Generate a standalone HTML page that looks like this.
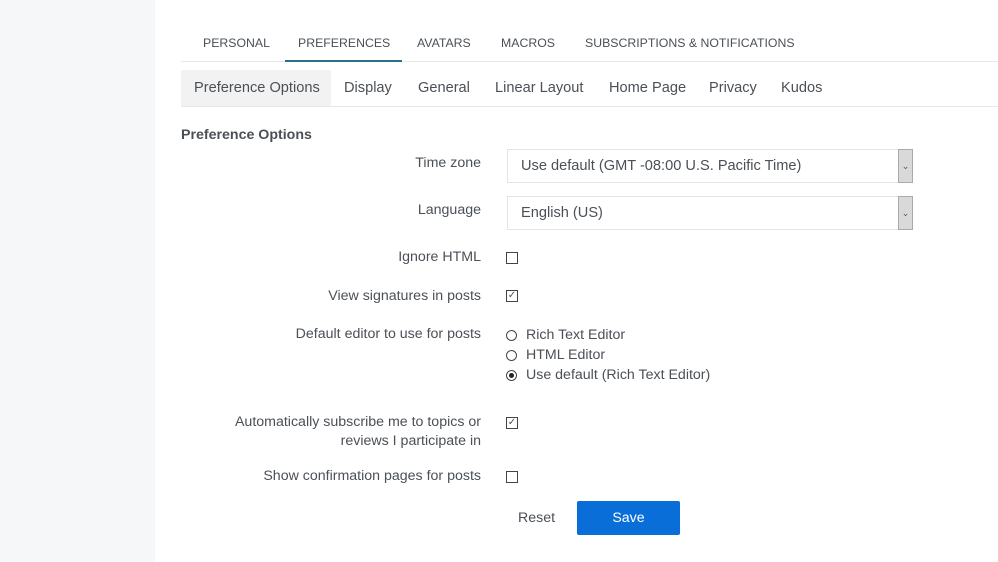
<!DOCTYPE html>
<html><head><style>
body{margin:0;width:998px;height:562px;background:#fff;font-family:"Liberation Sans",sans-serif;color:#4b5057;position:relative;overflow:hidden}
.a{position:absolute;white-space:nowrap}
.side{left:0;top:0;width:155px;height:562px;background:#f6f7f9}
.tab{top:36px;font-size:12.3px}
.sub{top:80px;font-size:14.6px}
.lbl{right:517px;font-size:14.2px;text-align:right;line-height:19px}
.sel{left:507px;width:406px;height:34px;border:1px solid #e4e4e4;box-sizing:border-box;font-size:14.6px;line-height:33px;padding-left:13px}
.arr{position:absolute;right:-1px;top:-1px;width:15px;height:34px;background:#d9d9d9;border:1px solid #aaa;box-sizing:border-box;font-size:9px;text-align:center;line-height:32px;color:#555}
.cb{left:506px;width:10px;height:10px;border:1px solid #444;font-size:10px;line-height:10px;text-align:center}
.rd{left:506px;width:9px;height:9px;border:1px solid #444;border-radius:50%}
.rt{left:526px;font-size:14.2px}
</style></head><body>
<div class="a side"></div>
<div class="a tab" style="left:203px">PERSONAL</div>
<div class="a tab" style="left:298px">PREFERENCES</div>
<div class="a tab" style="left:417px">AVATARS</div>
<div class="a tab" style="left:501px">MACROS</div>
<div class="a tab" style="left:585px">SUBSCRIPTIONS &amp; NOTIFICATIONS</div>
<div class="a" style="left:181px;top:61px;width:817px;height:1px;background:#e6e8ea"></div>
<div class="a" style="left:285px;top:60px;width:117px;height:2px;background:#2b6f8c"></div>
<div class="a" style="left:181px;top:70px;width:150px;height:36px;background:#f2f2f2"></div>
<div class="a" style="left:181px;top:106px;width:817px;height:1px;background:#e6e8ea"></div>
<div class="a sub" style="left:194px">Preference Options</div>
<div class="a sub" style="left:344px">Display</div>
<div class="a sub" style="left:418px">General</div>
<div class="a sub" style="left:495px">Linear Layout</div>
<div class="a sub" style="left:609px">Home Page</div>
<div class="a sub" style="left:709px">Privacy</div>
<div class="a sub" style="left:781px">Kudos</div>
<div class="a" style="left:181px;top:127px;font-size:14.2px;font-weight:bold">Preference Options</div>
<div class="a lbl" style="top:154px">Time zone</div>
<div class="a sel" style="top:149px">Use default (GMT -08:00 U.S. Pacific Time)<div class="arr">&#8964;</div></div>
<div class="a lbl" style="top:201px">Language</div>
<div class="a sel" style="top:196px">English (US)<div class="arr">&#8964;</div></div>
<div class="a lbl" style="top:248px">Ignore HTML</div>
<div class="a cb" style="top:252px"></div>
<div class="a lbl" style="top:287px">View signatures in posts</div>
<div class="a cb" style="top:290px">&#10003;</div>
<div class="a lbl" style="top:325px">Default editor to use for posts</div>
<div class="a rd" style="top:330px"></div><div class="a rt" style="top:327px">Rich Text Editor</div>
<div class="a rd" style="top:350px"></div><div class="a rt" style="top:347px">HTML Editor</div>
<div class="a rd" style="top:370px"><div style="margin:2px;width:5px;height:5px;border-radius:50%;background:#222"></div></div><div class="a rt" style="top:367px">Use default (Rich Text Editor)</div>
<div class="a lbl" style="top:413px">Automatically subscribe me to topics or<br>reviews I participate in</div>
<div class="a cb" style="top:417px">&#10003;</div>
<div class="a lbl" style="top:467px">Show confirmation pages for posts</div>
<div class="a cb" style="top:471px"></div>
<div class="a" style="left:518px;top:510px;font-size:14.2px">Reset</div>
<div class="a" style="left:577px;top:501px;width:103px;height:34px;background:#0a6ed8;border-radius:2px;color:#fff;font-size:14.2px;text-align:center;line-height:34px">Save</div>
</body></html>
